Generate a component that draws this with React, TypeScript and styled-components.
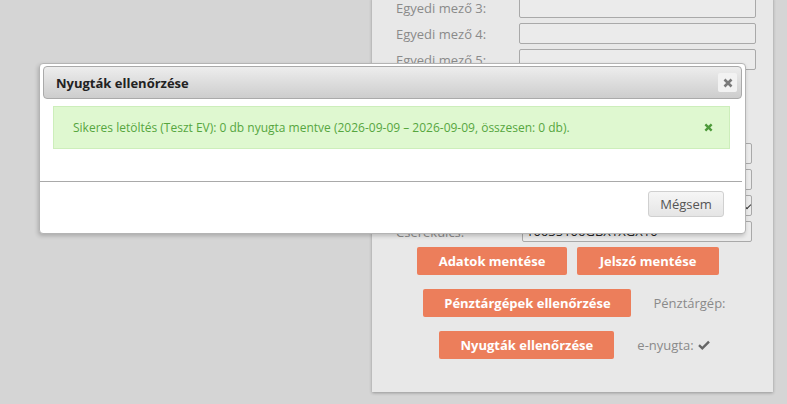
import React from 'react';
import styled, { createGlobalStyle } from 'styled-components';

const GlobalStyle = createGlobalStyle`
  html, body {
    margin: 0;
    padding: 0;
    background: #d5d5d5;
    font-family: "Open Sans", "DejaVu Sans", sans-serif;
  }
`;

const Page = styled.div`
  position: relative;
  width: 787px;
  height: 404px;
  overflow: hidden;
`;

const Panel = styled.section`
  width: 401px;
  margin: -3px 0 0 372px;
  padding: 0 0 33px;
  background: #e8e8e8;
  box-shadow: 0 1px 3px rgba(0, 0, 0, 0.3);
  box-sizing: border-box;
`;

const Fields = styled.div`
  display: flex;
  flex-direction: column;
  gap: 5px;
`;

const Field = styled.div<{ $labelWidth: number; $inputWidth: number }>`
  display: grid;
  grid-template-columns: ${(p) => p.$labelWidth}px ${(p) => p.$inputWidth}px;
  align-items: center;
  padding-left: 24px;
`;

const Label = styled.span`
  font-size: 13px;
  color: #8a8a8a;
  white-space: nowrap;
`;

const Input = styled.div`
  height: 21px;
  box-sizing: border-box;
  border: 1px solid #a9a9a9;
  border-radius: 2px;
  background: #ebebeb;
  font-size: 13px;
  line-height: 19px;
  padding: 0 3px;
  color: #222;
  position: relative;
`;

const SelectArrow = styled.span`
  position: absolute;
  right: 1px;
  top: 6px;
  width: 5px;
  height: 5px;
  border-right: 1px solid #333;
  border-bottom: 1px solid #333;
  transform: rotate(45deg);
`;

const Spacer = styled.div`
  height: 63px;
`;

const ButtonRow = styled.div<{ $gap: number; $top: number; $offset?: number }>`
  display: flex;
  justify-content: center;
  align-items: center;
  gap: ${(p) => p.$gap}px;
  margin-top: ${(p) => p.$top}px;
  padding-left: ${(p) => Math.max(p.$offset ?? 0, 0)}px;
  padding-right: ${(p) => Math.max(-(p.$offset ?? 0), 0)}px;
`;

const OrangeButton = styled.button<{ $width: number }>`
  width: ${(p) => p.$width}px;
  height: 28px;
  border: none;
  border-radius: 2px;
  background: #ec7e5b;
  color: #fff;
  font-family: inherit;
  font-weight: 700;
  font-size: 13px;
  padding: 0;
`;

const Status = styled.span`
  display: inline-flex;
  align-items: center;
  gap: 4px;
  font-size: 13px;
  color: #8a8a8a;
  min-width: 67px;
`;

const Dialog = styled.div`
  position: absolute;
  left: 39px;
  top: 63px;
  width: 707px;
  height: 171px;
  box-sizing: border-box;
  background: #fff;
  border: 1px solid #b4b4b4;
  border-radius: 4px;
  box-shadow: -1px 2px 4px rgba(0, 0, 0, 0.2);
  padding: 2px 3px 0 3px;
  display: flex;
  flex-direction: column;
`;

const TitleBar = styled.div`
  height: 33px;
  box-sizing: border-box;
  display: flex;
  align-items: center;
  justify-content: space-between;
  padding: 0 4px 0 12px;
  border: 1px solid #aaa;
  border-radius: 4px;
  background: linear-gradient(#ededed, #cdcdcd);
`;

const Title = styled.span`
  font-size: 13px;
  font-weight: 700;
  color: #222;
`;

const CloseButton = styled.span`
  width: 19px;
  height: 19px;
  display: flex;
  align-items: center;
  justify-content: center;
  background: #f2f2f2;
  border-radius: 2px;
`;

const Content = styled.div`
  flex: 1;
  padding: 7px 12px 0 10px;
`;

const Alert = styled.div`
  height: 43px;
  box-sizing: border-box;
  display: flex;
  align-items: center;
  justify-content: space-between;
  padding: 0 16px 0 19px;
  background: #dff8d0;
  border: 1px solid #cdeebb;
  font-size: 12px;
  color: #56a63f;
`;

const Footer = styled.div`
  height: 52px;
  box-sizing: border-box;
  margin: 0 0 0 -3px;
  border-top: 1px solid #a9a9a9;
  display: flex;
  justify-content: flex-end;
  padding: 9px 18px 0 0;
`;

const GrayButton = styled.button`
  width: 76px;
  height: 26px;
  border: 1px solid #d0d0d0;
  border-radius: 3px;
  background: linear-gradient(#f6f6f6, #e5e5e5);
  color: #555;
  font-family: inherit;
  font-size: 13px;
  padding: 0;
`;

const Cross = ({ color, size }: { color: string; size: number }) => (
  <svg width={size} height={size} viewBox="0 0 10 10">
    <path d="M1.5 1.5 L8.5 8.5 M8.5 1.5 L1.5 8.5" stroke={color} strokeWidth="2.6" strokeLinecap="butt" />
  </svg>
);

const Check = () => (
  <svg width="12" height="10" viewBox="0 0 12 10">
    <path d="M1 5.2 L4.3 8.3 L11 1.6" fill="none" stroke="#666" strokeWidth="2.4" />
  </svg>
);

const App = () => {
  return (
    <>
      <GlobalStyle />
      <Page>
        <Panel>
          <Fields>
            <Field $labelWidth={123} $inputWidth={237}>
              <Label>Egyedi mező 3:</Label>
              <Input />
            </Field>
            <Field $labelWidth={123} $inputWidth={237}>
              <Label>Egyedi mező 4:</Label>
              <Input />
            </Field>
            <Field $labelWidth={123} $inputWidth={237}>
              <Label>Egyedi mező 5:</Label>
              <Input />
            </Field>
            <Spacer />
            <Field $labelWidth={126} $inputWidth={230}>
              <Label>Adószám:</Label>
              <Input />
            </Field>
            <Field $labelWidth={126} $inputWidth={230}>
              <Label>Felhasználó:</Label>
              <Input />
            </Field>
            <Field $labelWidth={126} $inputWidth={230}>
              <Label>Környezet:</Label>
              <Input>
                Teszt
                <SelectArrow />
              </Input>
            </Field>
            <Field $labelWidth={126} $inputWidth={230}>
              <Label>Cserekulcs:</Label>
              <Input>10635106GBX1XGX10</Input>
            </Field>
          </Fields>

          <ButtonRow $gap={10} $top={5} $offset={-9}>
            <OrangeButton $width={150}>Adatok mentése</OrangeButton>
            <OrangeButton $width={142}>Jelszó mentése</OrangeButton>
          </ButtonRow>
          <ButtonRow $gap={22} $top={14} $offset={4}>
            <OrangeButton $width={208}>Pénztárgépek ellenőrzése</OrangeButton>
            <Status>Pénztárgép:</Status>
          </ButtonRow>
          <ButtonRow $gap={23} $top={14} $offset={4}>
            <OrangeButton $width={175}>Nyugták ellenőrzése</OrangeButton>
            <Status>
              e-nyugta: <Check />
            </Status>
          </ButtonRow>
        </Panel>

        <Dialog>
          <TitleBar>
            <Title>Nyugták ellenőrzése</Title>
            <CloseButton>
              <Cross color="#7a7a7a" size={10} />
            </CloseButton>
          </TitleBar>
          <Content>
            <Alert>
              <span>Sikeres letöltés (Teszt EV): 0 db nyugta mentve (2026-09-09 – 2026-09-09, összesen: 0 db).</span>
              <Cross color="#4d9a3a" size={9} />
            </Alert>
          </Content>
          <Footer>
            <GrayButton>Mégsem</GrayButton>
          </Footer>
        </Dialog>
      </Page>
    </>
  );
};

export default App;
